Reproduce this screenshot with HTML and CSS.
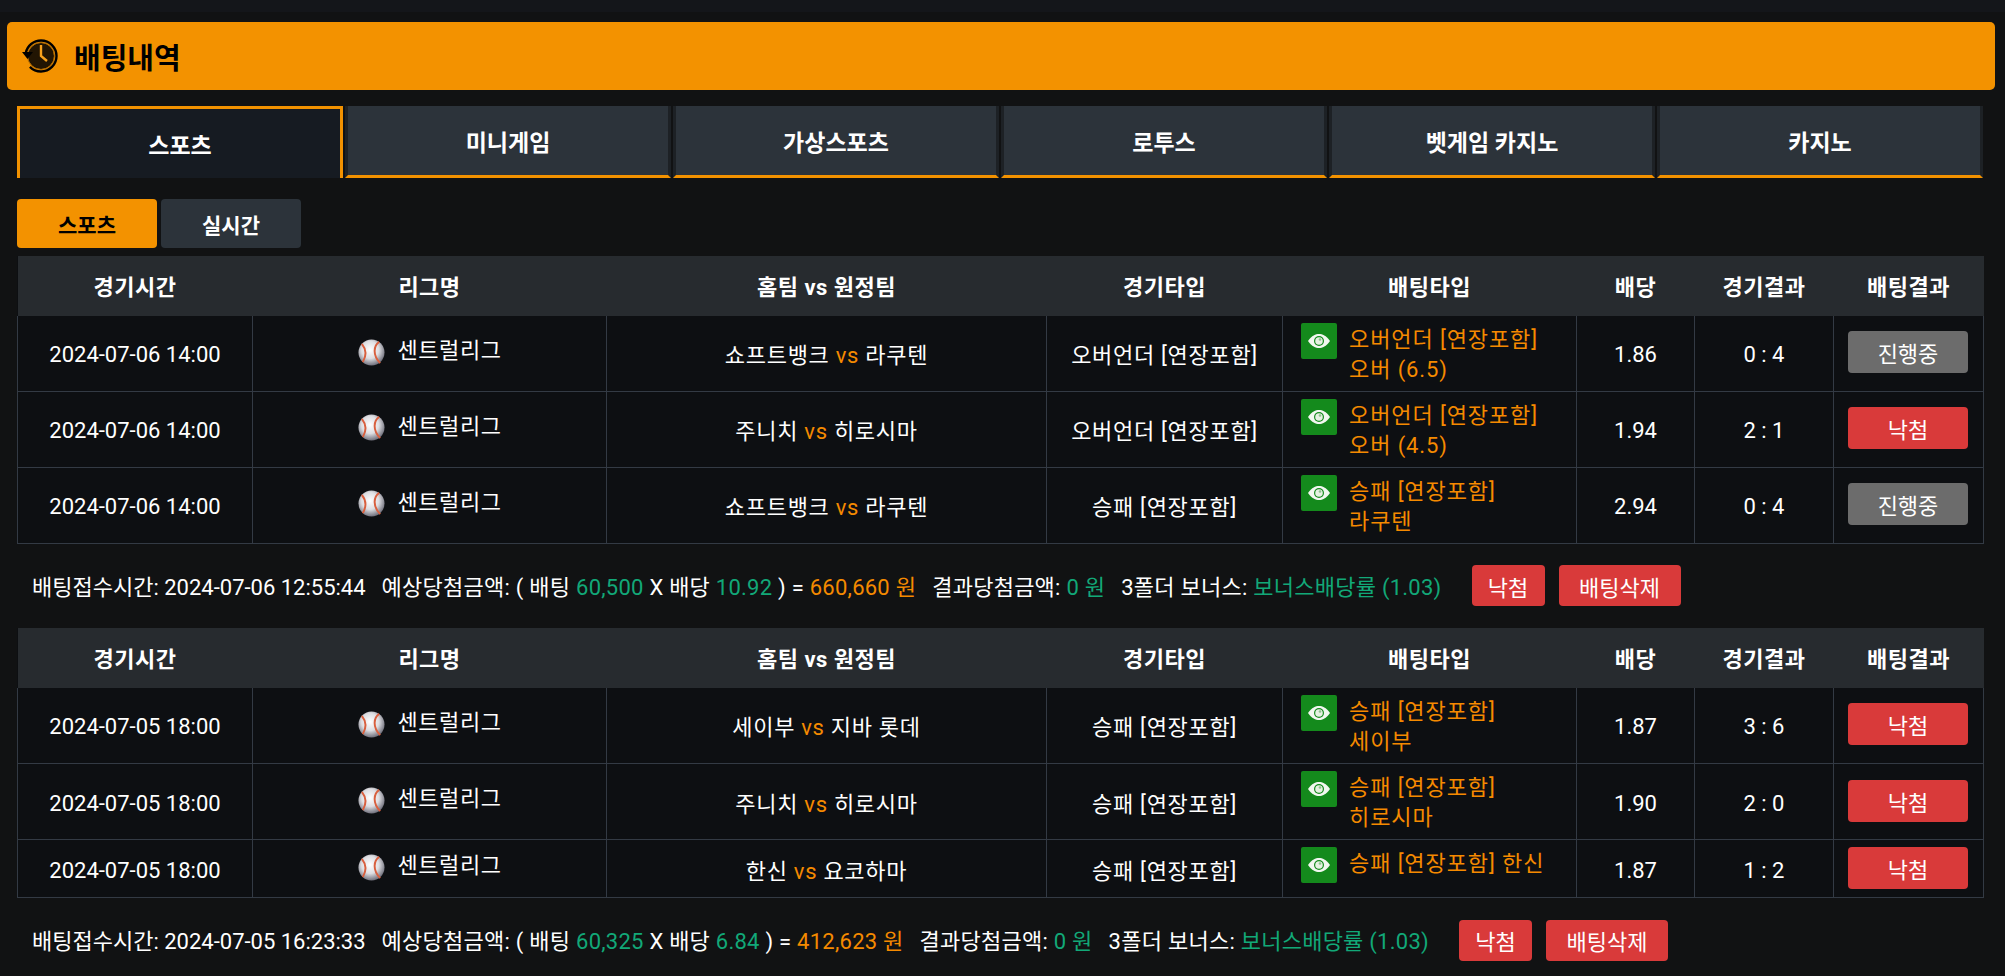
FILE: index.html
```html
<!DOCTYPE html>
<html lang="ko">

<head>
    <meta charset="UTF-8">
    <meta name="viewport" content="width=device-width, initial-scale=1.0">
    <title>배팅내역</title>
    <link rel="stylesheet" href="styles.css">
</head>

<body>
    <div class="top-strip"></div>

    <div class="page-title">
        <svg class="history-icon" width="38" height="36" viewBox="0 0 38 36">
            <circle cx="20" cy="18" r="13" fill="#221503"/>
            <circle cx="20" cy="18" r="13.500" fill="none" stroke="#a86602" stroke-width="1"/>
            <circle cx="20" cy="18" r="15.500" fill="none" stroke="#000" stroke-width="2.400" stroke-dasharray="36.500 15 46"/>
            <path d="M20 7v11l6 5" fill="none" stroke="#f7a11c" stroke-width="2.400"/>
            <path d="M1 14h11l-5.500 7z" fill="#000"/>
        </svg>
        <h2>배팅내역</h2>
    </div>

    <div class="tabs">
        <a class="tab active">스포츠</a>
        <a class="tab">미니게임</a>
        <a class="tab">가상스포츠</a>
        <a class="tab">로투스</a>
        <a class="tab">벳게임 카지노</a>
        <a class="tab">카지노</a>
    </div>

    <div class="sub-tabs">
        <a class="sub-tab active">스포츠</a>
        <a class="sub-tab">실시간</a>
    </div>

    <table class="bets first-table">
        <colgroup>
            <col class="c-time"><col class="c-league"><col class="c-match"><col class="c-type">
            <col class="c-bet"><col class="c-odds"><col class="c-score"><col class="c-result">
        </colgroup>
        <thead>
            <tr>
                <th>경기시간</th><th>리그명</th><th>홈팀 vs 원정팀</th><th>경기타입</th>
                <th>배팅타입</th><th>배당</th><th>경기결과</th><th>배팅결과</th>
            </tr>
        </thead>
        <tbody>
            <tr>
                <td class="num">2024-07-06 14:00</td>
                <td><span class="league"><svg class="ball" viewBox="0 0 28 28"><use href="#baseball"/></svg><span>센트럴리그</span></span></td>
                <td class="wide">쇼프트뱅크 <span class="vs">vs</span> 라쿠텐</td>
                <td class="wide">오버언더 [연장포함]</td>
                <td class="bet-cell"><div class="bet-type"><span class="eye"><svg width="26" height="16" viewBox="0 0 24 16"><use href="#eye"/></svg></span><span class="bet-text">오버언더 [연장포함]<br>오버 (6.5)</span></div></td>
                <td class="num">1.86</td>
                <td class="num">0 : 4</td>
                <td><span class="status pending">진행중</span></td>
            </tr>
            <tr>
                <td class="num">2024-07-06 14:00</td>
                <td><span class="league"><svg class="ball" viewBox="0 0 28 28"><use href="#baseball"/></svg><span>센트럴리그</span></span></td>
                <td class="wide">주니치 <span class="vs">vs</span> 히로시마</td>
                <td class="wide">오버언더 [연장포함]</td>
                <td class="bet-cell"><div class="bet-type"><span class="eye"><svg width="26" height="16" viewBox="0 0 24 16"><use href="#eye"/></svg></span><span class="bet-text">오버언더 [연장포함]<br>오버 (4.5)</span></div></td>
                <td class="num">1.94</td>
                <td class="num">2 : 1</td>
                <td><span class="status lost">낙첨</span></td>
            </tr>
            <tr>
                <td class="num">2024-07-06 14:00</td>
                <td><span class="league"><svg class="ball" viewBox="0 0 28 28"><use href="#baseball"/></svg><span>센트럴리그</span></span></td>
                <td class="wide">쇼프트뱅크 <span class="vs">vs</span> 라쿠텐</td>
                <td class="wide">승패 [연장포함]</td>
                <td class="bet-cell"><div class="bet-type"><span class="eye"><svg width="26" height="16" viewBox="0 0 24 16"><use href="#eye"/></svg></span><span class="bet-text">승패 [연장포함]<br>라쿠텐</span></div></td>
                <td class="num">2.94</td>
                <td class="num">0 : 4</td>
                <td><span class="status pending">진행중</span></td>
            </tr>
        </tbody>
    </table>

    <div class="summary">
        <span class="item first">배팅접수시간: 2024-07-06 12:55:44</span>
        <span class="item">예상당첨금액: ( 배팅 <span class="green">60,500</span> X 배당 <span class="green">10.92</span> ) = <span class="orange">660,660 원</span></span>
        <span class="item">결과당첨금액: <span class="green">0 원</span></span>
        <span class="item">3폴더 보너스: <span class="green">보너스배당률 (1.03)</span></span>
        <a class="action small">낙첨</a>
        <a class="action">배팅삭제</a>
    </div>

    <table class="bets">
        <colgroup>
            <col class="c-time"><col class="c-league"><col class="c-match"><col class="c-type">
            <col class="c-bet"><col class="c-odds"><col class="c-score"><col class="c-result">
        </colgroup>
        <thead>
            <tr>
                <th>경기시간</th><th>리그명</th><th>홈팀 vs 원정팀</th><th>경기타입</th>
                <th>배팅타입</th><th>배당</th><th>경기결과</th><th>배팅결과</th>
            </tr>
        </thead>
        <tbody>
            <tr>
                <td class="num">2024-07-05 18:00</td>
                <td><span class="league"><svg class="ball" viewBox="0 0 28 28"><use href="#baseball"/></svg><span>센트럴리그</span></span></td>
                <td class="wide">세이부 <span class="vs">vs</span> 지바 롯데</td>
                <td class="wide">승패 [연장포함]</td>
                <td class="bet-cell"><div class="bet-type"><span class="eye"><svg width="26" height="16" viewBox="0 0 24 16"><use href="#eye"/></svg></span><span class="bet-text">승패 [연장포함]<br>세이부</span></div></td>
                <td class="num">1.87</td>
                <td class="num">3 : 6</td>
                <td><span class="status lost">낙첨</span></td>
            </tr>
            <tr>
                <td class="num">2024-07-05 18:00</td>
                <td><span class="league"><svg class="ball" viewBox="0 0 28 28"><use href="#baseball"/></svg><span>센트럴리그</span></span></td>
                <td class="wide">주니치 <span class="vs">vs</span> 히로시마</td>
                <td class="wide">승패 [연장포함]</td>
                <td class="bet-cell"><div class="bet-type"><span class="eye"><svg width="26" height="16" viewBox="0 0 24 16"><use href="#eye"/></svg></span><span class="bet-text">승패 [연장포함]<br>히로시마</span></div></td>
                <td class="num">1.90</td>
                <td class="num">2 : 0</td>
                <td><span class="status lost">낙첨</span></td>
            </tr>
            <tr class="short">
                <td class="num">2024-07-05 18:00</td>
                <td><span class="league"><svg class="ball" viewBox="0 0 28 28"><use href="#baseball"/></svg><span>센트럴리그</span></span></td>
                <td class="wide">한신 <span class="vs">vs</span> 요코하마</td>
                <td class="wide">승패 [연장포함]</td>
                <td class="bet-cell"><div class="bet-type"><span class="eye"><svg width="26" height="16" viewBox="0 0 24 16"><use href="#eye"/></svg></span><span class="bet-text">승패 [연장포함] 한신</span></div></td>
                <td class="num">1.87</td>
                <td class="num">1 : 2</td>
                <td><span class="status lost">낙첨</span></td>
            </tr>
        </tbody>
    </table>

    <div class="summary">
        <span class="item first">배팅접수시간: 2024-07-05 16:23:33</span>
        <span class="item">예상당첨금액: ( 배팅 <span class="green">60,325</span> X 배당 <span class="green">6.84</span> ) = <span class="orange">412,623 원</span></span>
        <span class="item">결과당첨금액: <span class="green">0 원</span></span>
        <span class="item">3폴더 보너스: <span class="green">보너스배당률 (1.03)</span></span>
        <a class="action small">낙첨</a>
        <a class="action">배팅삭제</a>
    </div>

    <svg class="defs" width="0" height="0">
        <defs>
            <radialGradient id="ballFill" cx="45%" cy="40%" r="60%">
                <stop offset="0" stop-color="#fff"/>
                <stop offset="0.55" stop-color="#dedee2"/>
                <stop offset="1" stop-color="#70707c"/>
            </radialGradient>
            <symbol id="baseball" viewBox="0 0 28 28">
                <circle cx="14" cy="14" r="13.500" fill="url(#ballFill)"/>
                <path d="M4 5c4 5 5 12 1 19" fill="none" stroke="#d9603f" stroke-width="2"/>
                <path d="M22 3c-6 4-7 14 1 22" fill="none" stroke="#d9603f" stroke-width="2"/>
            </symbol>
            <symbol id="eye" viewBox="0 0 24 16">
                <path d="M1 8C5 2.500 8.500 1 12 1s7 1.500 11 7c-4 5.500-7.500 7-11 7S5 13.500 1 8z" fill="#f2f7f0"/>
                <circle cx="12" cy="8" r="5" fill="#148a1c"/>
                <circle cx="12" cy="8" r="3.800" fill="#e6f1e2"/>
                <circle cx="13" cy="6.500" r="1.300" fill="#8fc48f"/>
            </symbol>
        </defs>
    </svg>
</body>

</html>
```

FILE: styles.css
```css
* {
    box-sizing: border-box;
}

body {
    font-family: Roboto, "Noto Sans CJK KR", sans-serif;
    margin: 0;
    background-color: #111213;
    color: #fff;
    font-size: 22px;
}

.top-strip {
    height: 12px;
    margin-bottom: 10px;
    background-color: #14161a;
}

.page-title {
    display: flex;
    align-items: center;
    height: 68px;
    margin: 0 10px 0 7px;
    padding-left: 14px;
    background-color: #f39200;
    border-radius: 5px;
}

.page-title h2 {
    margin: 0 0 0 15px;
    color: #000;
    font-size: 29px;
    font-weight: 700;
}

.tabs {
    display: flex;
    gap: 2px;
    margin: 16px 22px 0 17px;
}

.tab {
    flex: 1;
    display: flex;
    align-items: center;
    justify-content: center;
    height: 72px;
    background-color: #2c333a;
    border: 3px solid #1d2125;
    border-top: 0;
    border-bottom: 3px solid #f39200;
    font-size: 23px;
    font-weight: 700;
}

.tab.active {
    background-color: #161b22;
    border: 3px solid #f39200;
    border-bottom: 0;
}

.sub-tabs {
    display: flex;
    gap: 4px;
    margin: 21px 22px 8px 17px;
}

.sub-tab {
    display: flex;
    align-items: center;
    justify-content: center;
    width: 140px;
    height: 49px;
    background-color: #2c333a;
    border-radius: 4px;
    font-size: 21px;
    font-weight: 700;
}

.sub-tab.active {
    background-color: #f39200;
    color: #000;
}

.bets {
    width: 1966px;
    margin-left: 17px;
    border-collapse: collapse;
    table-layout: fixed;
    background-color: #0d0f12;
}

.c-time { width: 235px; }
.c-league { width: 354px; }
.c-match { width: 440px; }
.c-type { width: 236px; }
.c-bet { width: 294px; }
.c-odds { width: 118px; }
.c-score { width: 139px; }
.c-result { width: 150px; }

.bets th {
    height: 60px;
    padding: 0 0 2px;
    background-color: #272b2f;
    font-size: 22px;
    font-weight: 700;
    letter-spacing: 0.5px;
}

.bets td {
    height: 76px;
    padding: 0;
    border: 1px solid #333a44;
    text-align: center;
}

.bets tbody tr:first-child td {
    border-top: 0;
}

.first-table tbody tr:first-child td {
    height: 75px;
}

.bets tr.short td {
    height: 58px;
}

.bets td.num {
    padding-top: 3px;
}

.wide {
    letter-spacing: 0.7px;
}

.league {
    display: inline-flex;
    align-items: center;
    gap: 12px;
    margin-left: 1px;
    letter-spacing: 0.6px;
}

.league span {
    position: relative;
    top: -4px;
}

.ball {
    width: 27px;
    height: 27px;
}

.vs,
.orange,
.bet-text {
    color: #f58a00;
}

.green {
    color: #12a878;
}

.bet-cell {
    vertical-align: top;
}

.bet-type {
    display: flex;
    gap: 12px;
    padding: 7px 0 0 18px;
    text-align: left;
}

.eye {
    flex: none;
    display: flex;
    align-items: center;
    justify-content: center;
    width: 36px;
    height: 36px;
    background-color: #148a1c;
    border-radius: 2px;
}

.bet-text {
    line-height: 30px;
    margin-top: 2px;
    letter-spacing: 0.9px;
}

.status {
    display: inline-flex;
    align-items: center;
    justify-content: center;
    width: 120px;
    height: 42px;
    margin: 0 1px 2px 0;
    border-radius: 4px;
    vertical-align: middle;
}

.pending {
    background-color: #6c6c6c;
}

.lost {
    background-color: #d93a3a;
}

.summary {
    display: flex;
    align-items: center;
    height: 84px;
    padding-left: 32px;
}

.item {
    position: relative;
    top: -1px;
    margin-right: 16px;
    letter-spacing: 0.25px;
    white-space: pre-wrap;
}

.item.first {
    letter-spacing: 0;
}

.action {
    display: flex;
    align-items: center;
    justify-content: center;
    width: 122px;
    height: 41px;
    margin-left: 14px;
    background-color: #d93a3a;
    border-radius: 4px;
}

.action.small {
    width: 73px;
    margin-left: 14px;
}

.defs {
    position: absolute;
}
```
